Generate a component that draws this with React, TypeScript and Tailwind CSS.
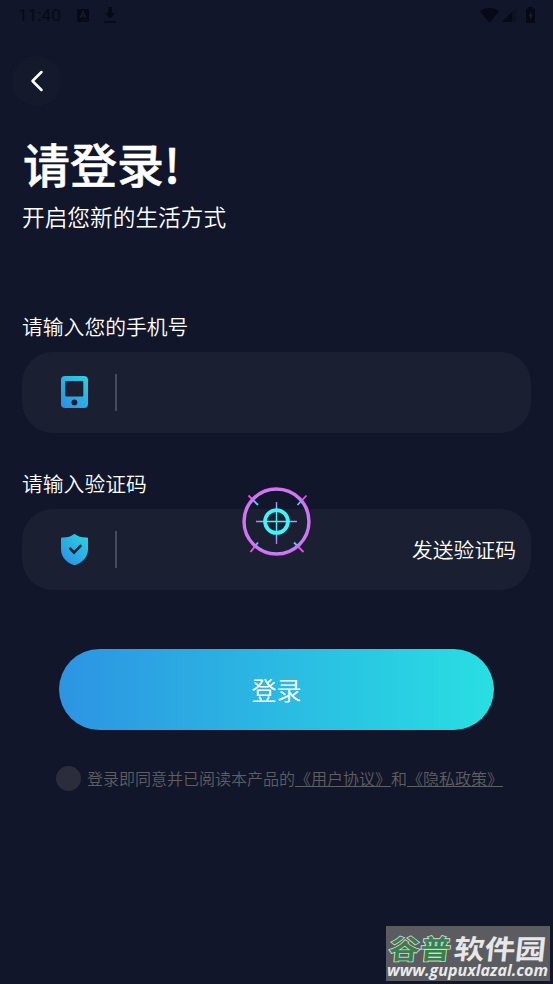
import { useState } from 'react'
import type { ReactNode } from 'react'

function StatusBar() {
  return (
    <div className="flex h-[30px] items-center justify-between pl-[18px] pr-[18px] text-[#070a16]">
      <div className="flex items-center">
        <span className="w-[59px] font-[family-name:Roboto,sans-serif] text-[17.2px] font-normal leading-[30px]">11:40</span>
        <svg width="12" height="13" viewBox="0 0 12 13">
          <rect width="12" height="13" rx="1.2" fill="currentColor" />
          <path d="M3.2 9 6 2.5 8.8 9M4.3 7h3.4" fill="none" stroke="#191d30" strokeWidth="1.3" />
          <path d="M6 11.3h5" stroke="#191d30" strokeWidth="0.8" strokeDasharray="1 1" />
        </svg>
        <svg className="ml-[15px]" width="12" height="16" viewBox="0 0 12 16" fill="currentColor">
          <path d="M4.2 0h3.6v6H11L6 11.5 1 6h3.2zM0 14h12v1.8H0z" />
        </svg>
      </div>
      <div className="flex items-center">
        <svg width="19" height="15" viewBox="0 0 19 15" fill="currentColor">
          <path d="M0 3.2C5.5-1 13.5-1 19 3.2L9.5 15z" />
        </svg>
        <svg className="ml-[3px]" width="14" height="14" viewBox="0 0 14 14">
          <path d="M0 14 14 0v14z" fill="#0d1120" />
          <path d="M0 14 10 4v10z" fill="currentColor" />
        </svg>
        <svg className="ml-[10px]" width="9" height="16" viewBox="0 0 9 16">
          <path d="M2.5 0h4v1.8H9V16H0V1.8h2.5z" fill="currentColor" />
          <path d="M5.2 4 2.5 9.3h1.7v4L6.8 8H5.2z" fill="#191d30" />
        </svg>
      </div>
    </div>
  )
}

function PhoneIcon() {
  return (
    <svg className="mb-px" width="27" height="32" viewBox="0 0 27 32">
      <defs>
        <linearGradient id="phone" x1="0.1" y1="1" x2="0.9" y2="0">
          <stop offset="0" stopColor="#2d90e4" />
          <stop offset="1" stopColor="#29d0e2" />
        </linearGradient>
      </defs>
      <rect width="27" height="32" rx="4" fill="url(#phone)" />
      <rect x="4.3" y="5" width="18" height="15.5" rx="0.8" fill="#1b1f32" />
      <circle cx="13.4" cy="26.4" r="2.9" fill="#1b1f32" />
    </svg>
  )
}

function ShieldIcon() {
  return (
    <svg width="27" height="31" viewBox="0 0 27 31">
      <defs>
        <linearGradient id="shield" x1="0.1" y1="1" x2="0.9" y2="0">
          <stop offset="0" stopColor="#2d8de5" />
          <stop offset="1" stopColor="#29d3e2" />
        </linearGradient>
      </defs>
      <path
        d="M12.3.5q1.2-.9 2.4 0C17 2.7 20.5 3.6 26 3.5q1 0 1 1V15c0 8-5.5 13.5-12 15.7q-1.5.5-3 0C5.5 28.5 0 23 0 15V4.5q0-1 1-1C6.5 3.6 10 2.7 12.3.5z"
        fill="url(#shield)"
      />
      <path d="m9.3 14.6 3.7 4 6.5-6.7" fill="none" stroke="#1b1f32" strokeWidth="2.6" strokeLinecap="round" />
    </svg>
  )
}

function TargetPointer() {
  return (
    <svg className="pointer-events-none absolute left-[242px] top-[487px]" width="69" height="69" viewBox="0 0 69 69" fill="none">
      <defs>
        <radialGradient id="ring" gradientUnits="userSpaceOnUse" cx="34.5" cy="34.5" r="35">
          <stop offset="0.84" stopColor="#98a4f8" />
          <stop offset="0.97" stopColor="#ea60f2" />
        </radialGradient>
        <radialGradient id="ticks" gradientUnits="userSpaceOnUse" cx="34.5" cy="34.5" r="41">
          <stop offset="0.7" stopColor="#62c6f8" />
          <stop offset="0.86" stopColor="#f04cf0" />
        </radialGradient>
        <radialGradient id="cross" gradientUnits="userSpaceOnUse" cx="34.5" cy="34.5" r="21">
          <stop offset="0.5" stopColor="#42f4fa" />
          <stop offset="1" stopColor="#d568f5" />
        </radialGradient>
      </defs>
      <circle cx="34.5" cy="34.5" r="32.5" stroke="url(#ring)" strokeWidth="3.4" />
      <path d="m6.5 8.5 9.5 9.5M64.5 8.5 55.5 18M8.5 65 16 55.5M61.5 65 52 55.5" stroke="url(#ticks)" strokeWidth="1.8" />
      <path d="M14 34.5h41M34.5 15v42" stroke="url(#cross)" strokeWidth="1.4" />
      <circle cx="34.5" cy="34.5" r="11.4" stroke="#42f4fa" strokeWidth="3.8" />
    </svg>
  )
}

function Field({ label, icon, type, value, onChange, children }: {
  label: string
  icon: ReactNode
  type: string
  value: string
  onChange: (v: string) => void
  children?: ReactNode
}) {
  return (
    <div>
      <label className="block text-[20.8px] leading-[30px]">{label}</label>
      <div className="mt-[11px] flex h-[81px] items-center rounded-[31px] bg-[#1b1f32] pl-[39px] pr-[15px]">
        {icon}
        <span className="ml-[27px] h-[37px] w-[2px] shrink-0 bg-[#4a4b59]" />
        <input type={type} value={value} onChange={e => onChange(e.target.value)} className="h-full min-w-0 flex-1 bg-transparent px-4 outline-none" />
        {children}
      </div>
    </div>
  )
}

function Watermark() {
  return (
    <div className="absolute left-[386px] top-[926px] h-[55px] w-[164px] bg-[#5b5c60]">
      <svg width="164" height="55" viewBox="0 0 164 55">
        <g fontFamily="'Noto Sans CJK SC', sans-serif" fontWeight="700" transform="translate(0 32.5) skewX(-6)">
          <text x="2" y="0" fontSize="27" textLength="62" lengthAdjust="spacingAndGlyphs" fill="#35814a" stroke="#d5d9d6" strokeWidth="1.6" paintOrder="stroke">谷普</text>
          <text x="67" y="0" fontSize="27" textLength="92" lengthAdjust="spacingAndGlyphs" fill="#e7e7e9">软件园</text>
        </g>
        <text x="1" y="50" fontFamily="'Open Sans', sans-serif" fontSize="16" fontWeight="700" fontStyle="italic" textLength="161" lengthAdjust="spacingAndGlyphs" fill="#e9e9eb">www.gupuxlazal.com</text>
      </svg>
    </div>
  )
}

export default function App() {
  const [telefone, setTelefone] = useState('')
  const [codigo, setCodigo] = useState('')
  const [aceito, setAceito] = useState(false)

  return (
    <div className="relative h-[984px] w-[553px] overflow-hidden bg-[#11162a] font-[family-name:'Noto_Sans_CJK_SC',sans-serif] font-[350] text-white">
      <StatusBar />

      <button className="ml-[12px] mt-[26px] flex size-[50px] items-center justify-center rounded-full bg-[#14192b]">
        <svg className="mr-px" width="14" height="22" viewBox="0 0 14 22" fill="none" stroke="white" strokeWidth="2.5" strokeLinecap="round" strokeLinejoin="round">
          <path d="M11.5 2 2.5 11l9 9" />
        </svg>
      </button>

      <div className="px-[22px]">
        <h1 className="mt-[27px] pl-px text-[47px] font-medium leading-[60px] [-webkit-text-stroke:0.5px_white]">请登录!</h1>
        <p className="mt-[8px] text-[22.7px] leading-[32px]">开启您新的生活方式</p>

        <div className="mt-[78px] flex flex-col gap-[35px]">
          <Field label="请输入您的手机号" icon={<PhoneIcon />} type="tel" value={telefone} onChange={setTelefone} />
          <Field label="请输入验证码" icon={<ShieldIcon />} type="text" value={codigo} onChange={setCodigo}>
            <button className="mb-[2px] shrink-0 text-[20.8px] leading-[30px]">发送验证码</button>
          </Field>
        </div>

        <button className="mx-[37px] mt-[59px] block h-[81px] w-[435px] rounded-full bg-linear-to-r/srgb from-[#2d94e2] to-[#28dfe2] text-[25px]">
          登录
        </button>
      </div>

      <div className="mt-[36px] flex items-center pl-[56px] text-[16px] leading-[26px] text-[#5f5f60]">
        <button
          onClick={() => setAceito(!aceito)}
          className={`mr-[6px] size-[25px] shrink-0 rounded-full ${aceito ? 'bg-[#2bb8e2]' : 'bg-[#2c2d3c]'}`}
        />
        <p className="-mt-px whitespace-nowrap">
          登录即同意并已阅读本产品的<a className="underline">《用户协议》</a>和<a className="underline">《隐私政策》</a>
        </p>
      </div>

      <TargetPointer />
      <Watermark />
    </div>
  )
}
